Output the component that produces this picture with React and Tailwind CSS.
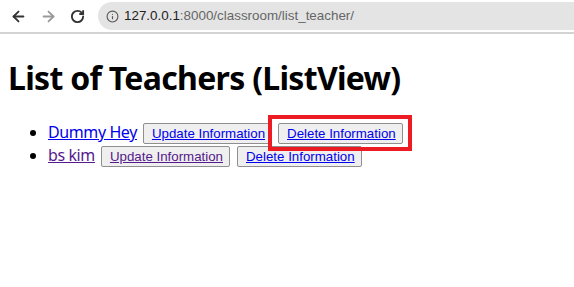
import React from 'react';
import { ArrowLeft, ArrowRight, RotateCw, Info } from 'lucide-react';

const teachers = [
  { id: 1, name: 'Dummy Hey', visited: false, updateVisited: false, gap: 'ml-[6px]' },
  { id: 2, name: 'bs kim', visited: true, updateVisited: true, gap: 'ml-[7px]' },
];

function BrowserBar() {
  return (
    <div className="h-[34px] border-b-2 border-[#d3d3d3] bg-white flex items-center">
      <div className="flex items-center">
        <ArrowLeft className="ml-[10px] w-[17px] h-[17px] text-[#333]" strokeWidth={2.5} />
        <ArrowRight className="ml-[13px] w-[17px] h-[17px] text-[#999]" strokeWidth={2.5} />
        <RotateCw className="ml-[13px] w-[15px] h-[15px] text-[#333]" strokeWidth={3} />
      </div>
      <div className="ml-[13px] flex-1 h-[28px] rounded-l-full bg-[#e4e4e4] flex items-center">
        <Info className="ml-[8px] w-[13px] h-[13px] text-[#555]" strokeWidth={2} />
        <span className="ml-[5px] text-[13.4px] font-['Liberation_Sans',Arial,sans-serif] text-[#666]">
          <span className="text-[#222]">127.0.0.1</span>:8000/classroom/list_teacher/
        </span>
      </div>
    </div>
  );
}

function LinkButton({ label, visited }) {
  return (
    <button className="h-[21px] pl-[8px] pr-[6px] bg-[#efefef] border border-[#8f8f8f] rounded-[2px] text-[13.3px] leading-[15px] font-['Liberation_Sans',Arial,sans-serif]">
      <span className={'underline ' + (visited ? 'text-[#551a8b]' : 'text-[#0000ee]')}>{label}</span>
    </button>
  );
}

export default function App() {
  return (
    <div className="w-[574px] h-[287px] bg-white overflow-hidden relative font-['Noto_Sans',sans-serif]">
      <BrowserBar />
      <div className="px-2">
        <h1 className="mt-[22px] text-[32px] leading-[43px] font-bold text-black tracking-[-0.7px]">
          List of Teachers (ListView)
        </h1>
        <ul className="mt-[21px] pl-[40px] list-disc text-[16px]">
          {teachers.map(t => (
            <li key={t.id} className="h-[23px]">
              <div className="flex items-center h-[23px]">
                <a
                  href="#"
                  className={'underline leading-[20px] tracking-[-0.4px] ' + (t.visited ? 'text-[#551a8b]' : 'text-[#0000ee]')}
                >
                  {t.name}
                </a>
                <span className="ml-[6px]">
                  <LinkButton label="Update Information" visited={t.updateVisited} />
                </span>
                <span className={t.gap}>
                  <LinkButton label="Delete Information" visited={false} />
                </span>
              </div>
            </li>
          ))}
        </ul>
      </div>
      <div className="absolute left-[268px] top-[115px] w-[144px] h-[36px] border-4 border-[#ed1c24]" />
    </div>
  );
}
